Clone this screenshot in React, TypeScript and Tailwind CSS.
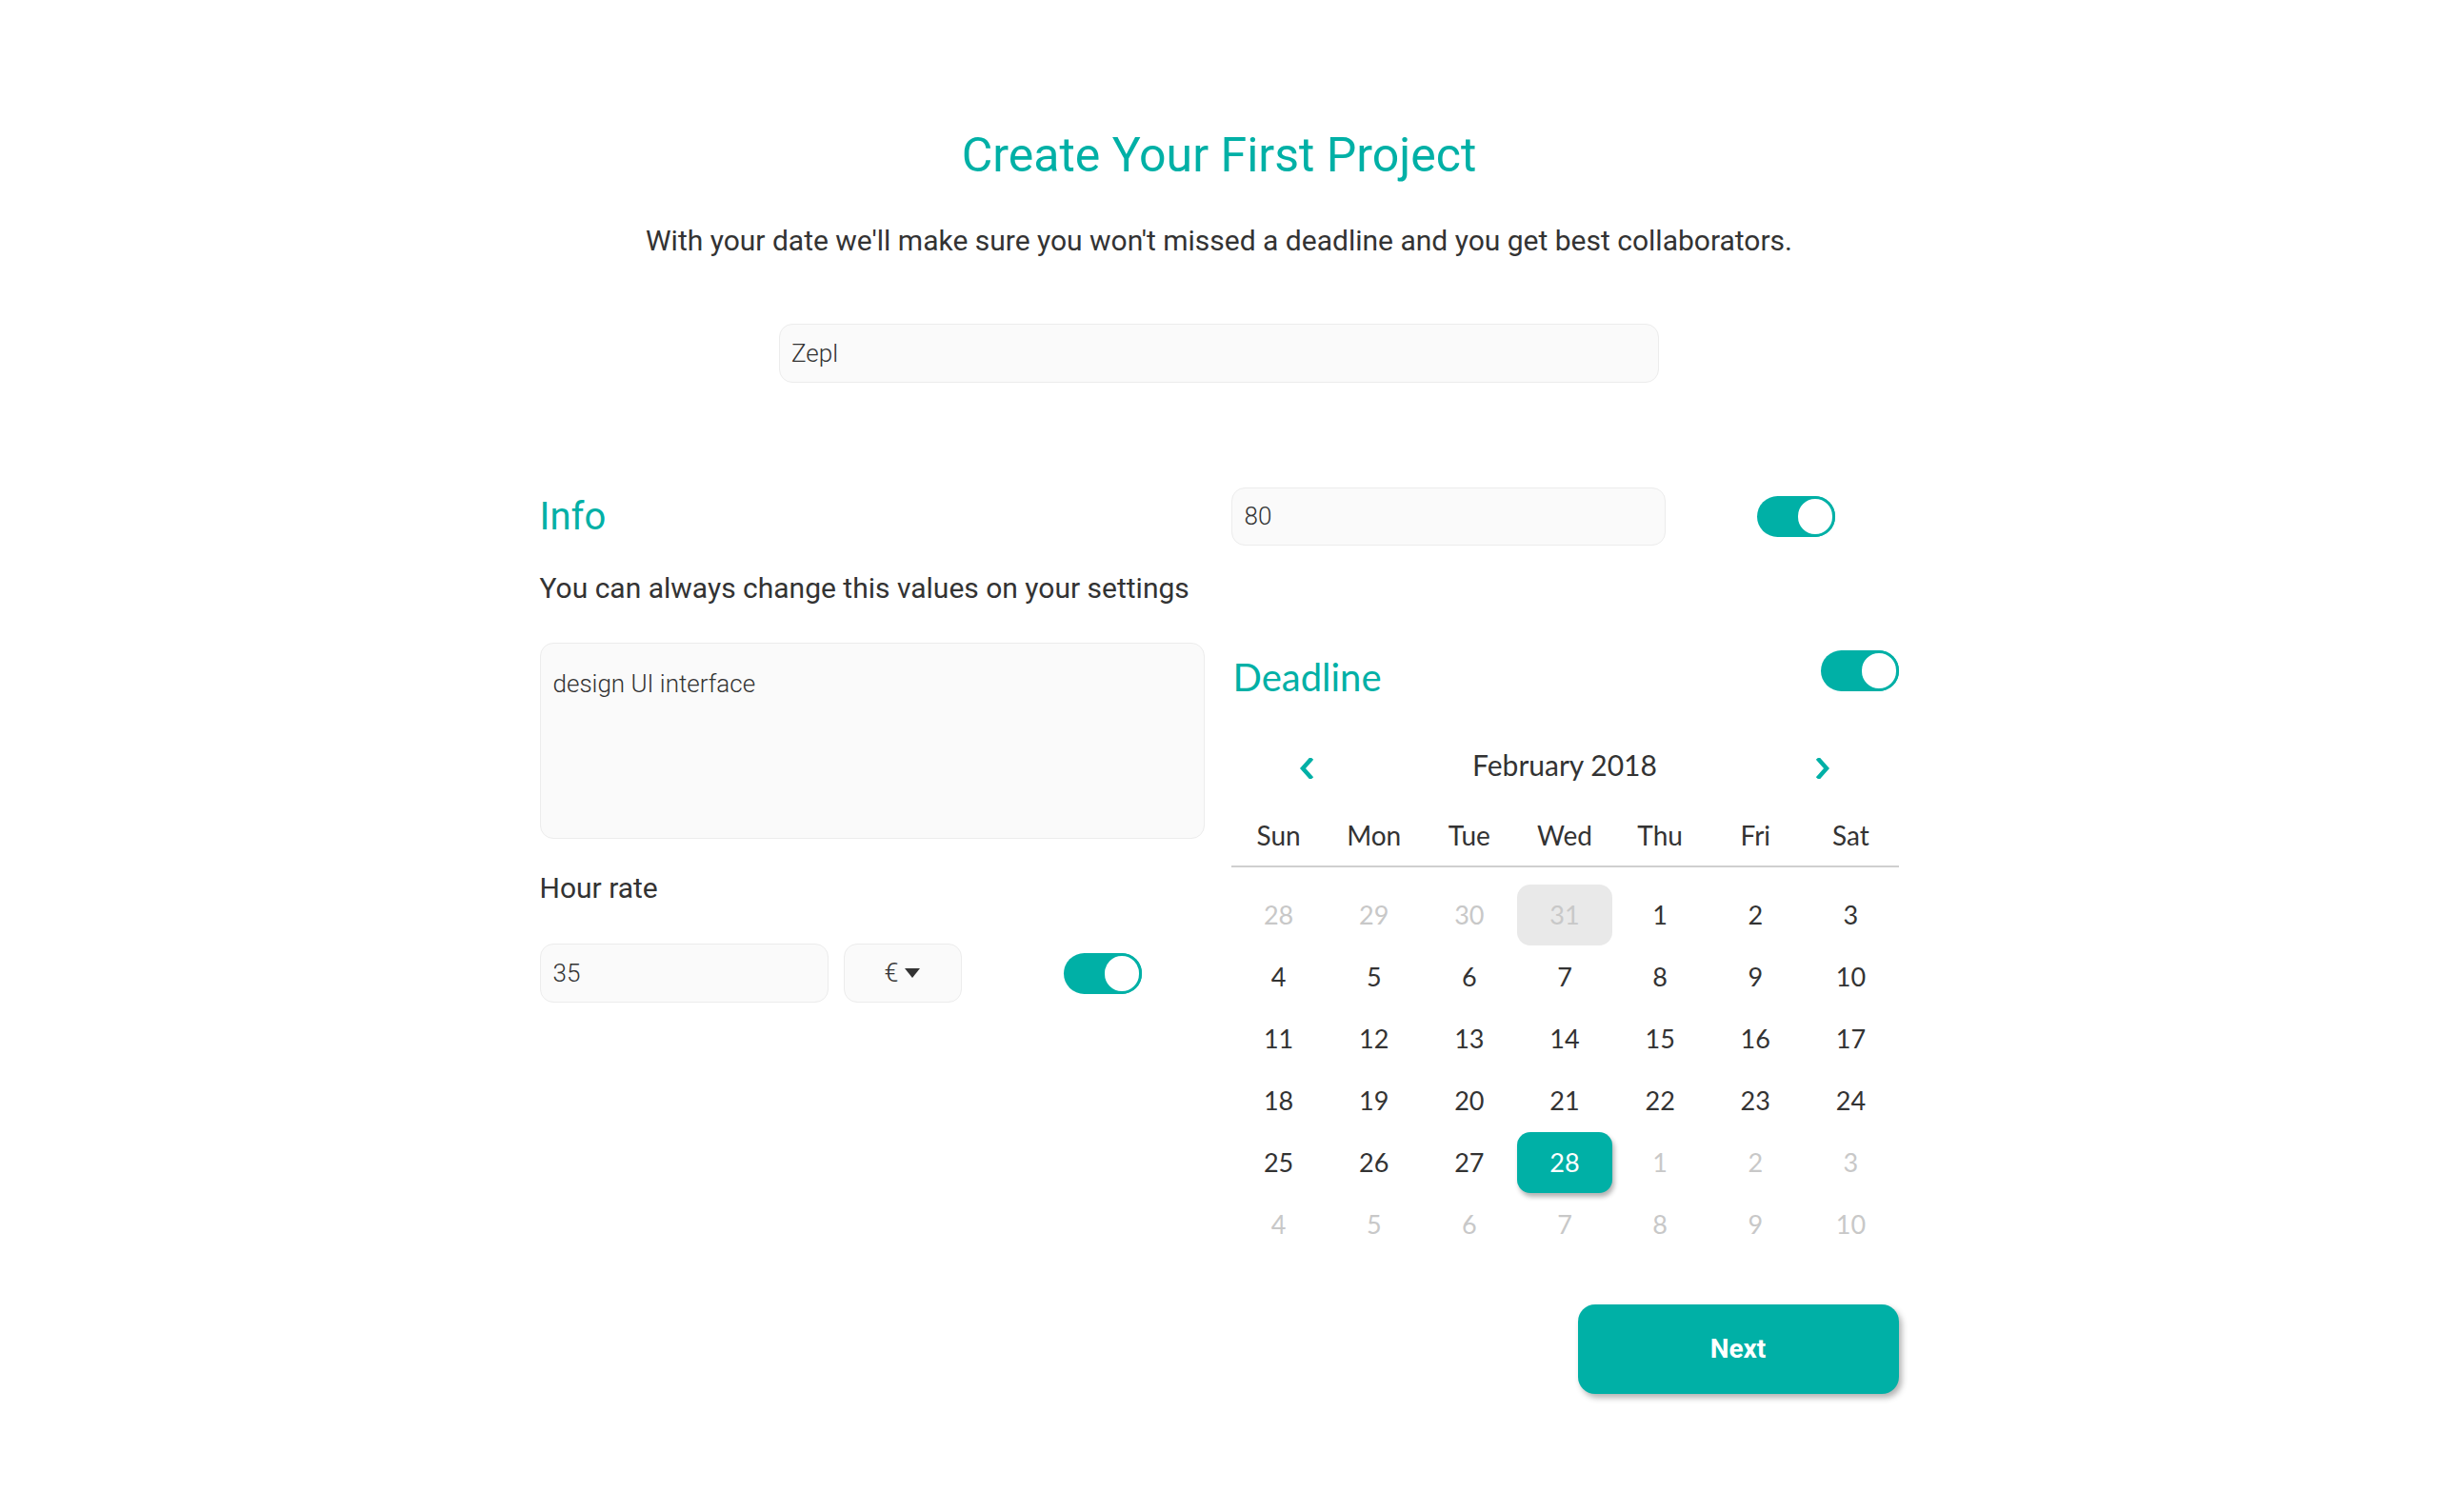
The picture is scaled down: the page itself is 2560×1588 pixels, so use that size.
import React from "react";

const TEAL = "#00b0a6";

function Toggle() {
  return (
    <div className="flex h-[43px] w-[82px] items-center justify-end rounded-full bg-[#00b0a6]">
      <div className="h-[43px] w-[42px] rounded-full border-[3px] border-[#00b0a6] bg-white" />
    </div>
  );
}

function Chevron({ dir }: { dir: "left" | "right" }) {
  return (
    <svg width="16" height="22" viewBox="0 0 16 22" fill="none">
      {dir === "left" ? (
        <polyline points="12,2 4,11 12,20" stroke={TEAL} strokeWidth="4.5" strokeLinecap="square" strokeLinejoin="miter" />
      ) : (
        <polyline points="4,2 12,11 4,20" stroke={TEAL} strokeWidth="4.5" strokeLinecap="square" strokeLinejoin="miter" />
      )}
    </svg>
  );
}

type Day = { n: number; muted?: boolean; hover?: boolean; sel?: boolean };

const days: Day[] = [
  { n: 28, muted: true }, { n: 29, muted: true }, { n: 30, muted: true }, { n: 31, muted: true, hover: true },
  { n: 1 }, { n: 2 }, { n: 3 },
  { n: 4 }, { n: 5 }, { n: 6 }, { n: 7 }, { n: 8 }, { n: 9 }, { n: 10 },
  { n: 11 }, { n: 12 }, { n: 13 }, { n: 14 }, { n: 15 }, { n: 16 }, { n: 17 },
  { n: 18 }, { n: 19 }, { n: 20 }, { n: 21 }, { n: 22 }, { n: 23 }, { n: 24 },
  { n: 25 }, { n: 26 }, { n: 27 }, { n: 28, sel: true }, { n: 1, muted: true }, { n: 2, muted: true }, { n: 3, muted: true },
  { n: 4, muted: true }, { n: 5, muted: true }, { n: 6, muted: true }, { n: 7, muted: true }, { n: 8, muted: true }, { n: 9, muted: true }, { n: 10, muted: true },
];

const weekdays = ["Sun", "Mon", "Tue", "Wed", "Thu", "Fri", "Sat"];

export default function App() {
  return (
    <div className="min-h-screen w-full bg-white text-[#333333] [font-family:Roboto,'Liberation_Sans',sans-serif]">
      <div className="flex flex-col items-center">
        <h1 className="pt-[138px] text-[50px] leading-[50px] font-normal text-[#00b0a6]">
          Create Your First Project
        </h1>
        <p className="mt-[50px] text-[30px] leading-[30px] text-[#333333]">
          With your date we'll make sure you won't missed a deadline and you get best collaborators.
        </p>
        <div className="mt-[72px] flex h-[62px] w-[924px] items-center rounded-[14px] border border-[#ececec] bg-[#fafafa] px-[12px] text-[26px] font-light text-[#333333]">
          Zepl
        </div>

        <div className="mt-[110px] flex w-[1427px] gap-[28px]">
          {/* Left column */}
          <div className="flex w-[698px] flex-col">
            <h2 className="mt-[11px] text-[40px] leading-[40px] font-normal text-[#00b0a6]">Info</h2>
            <p className="mt-[40px] text-[30px] leading-[30px]">You can always change this values on your settings</p>
            <div className="mt-[42px] h-[206px] w-[698px] rounded-[14px] border border-[#ececec] bg-[#fafafa] px-[13px] pt-[29px] text-[26px] leading-[26px] font-light">
              design UI interface
            </div>
            <p className="mt-[37px] text-[30px] leading-[30px]">Hour rate</p>
            <div className="mt-[43px] flex items-center">
              <div className="flex h-[62px] w-[303px] items-center rounded-[14px] border border-[#ececec] bg-[#fafafa] px-[13px] text-[26px] font-light">
                35
              </div>
              <div className="ml-[16px] flex h-[62px] w-[124px] items-center justify-center gap-[7px] rounded-[14px] border border-[#ececec] bg-[#fafafa] text-[27px] font-light">
                <span>€</span>
                <svg width="16" height="10" viewBox="0 0 16 10">
                  <polygon points="0,0 16,0 8,10" fill="#333333" />
                </svg>
              </div>
              <div className="ml-[107px]">
                <Toggle />
              </div>
            </div>
          </div>

          {/* Right column */}
          <div className="flex w-[701px] flex-col">
            <div className="flex items-center">
              <div className="flex h-[61px] w-[456px] items-center rounded-[14px] border border-[#ececec] bg-[#fafafa] px-[13px] text-[26px] font-light">
                80
              </div>
              <div className="ml-[96px]">
                <Toggle />
              </div>
            </div>

            <div className="mt-[110px] flex h-[43px] items-start justify-between [font-family:Lato,'Liberation_Sans',sans-serif]">
              <h2 className="mt-[8px] ml-[2px] text-[40px] leading-[40px] font-normal text-[#00b0a6]">Deadline</h2>
              <Toggle />
            </div>

            <div className="[font-family:Lato,'Liberation_Sans',sans-serif]">
              <div className="mt-[62px] flex h-[30px] items-start justify-between px-[71px]">
                <div className="mt-[8px]">
                  <Chevron dir="left" />
                </div>
                <span className="text-[30px] leading-[30px] text-[#333333]">February 2018</span>
                <div className="mt-[8px]">
                  <Chevron dir="right" />
                </div>
              </div>

              <div className="mt-[45px] grid grid-cols-7 border-b-2 border-[#cfcfcf] pb-[18px]">
                {weekdays.map((w) => (
                  <div key={w} className="text-center text-[28px] leading-[28px] text-[#333333]">
                    {w}
                  </div>
                ))}
              </div>

              <div className="mt-[18px] grid grid-cols-7 gap-y-[1px]">
                {days.map((d, i) => {
                  let cls = "flex h-[64px] items-center justify-center rounded-[14px] text-[27px] ";
                  if (d.sel) {
                    cls += "bg-[#00b0a6] text-white shadow-[2px_4px_5px_rgba(0,0,0,0.3)]";
                  } else if (d.hover) {
                    cls += "bg-[#e9e9e9] text-[#c8c8c8]";
                  } else if (d.muted) {
                    cls += "text-[#c8c8c8]";
                  } else {
                    cls += "text-[#333333]";
                  }
                  return (
                    <div key={i} className={cls}>
                      {d.n}
                    </div>
                  );
                })}
              </div>
            </div>

            <div className="mt-[52px] flex justify-end">
              <button className="flex h-[94px] w-[337px] items-center justify-center rounded-[18px] bg-[#00b0a6] text-[28px] font-bold text-white shadow-[3px_4px_6px_rgba(0,0,0,0.3)]">
                Next
              </button>
            </div>
          </div>
        </div>
      </div>
    </div>
  );
}
